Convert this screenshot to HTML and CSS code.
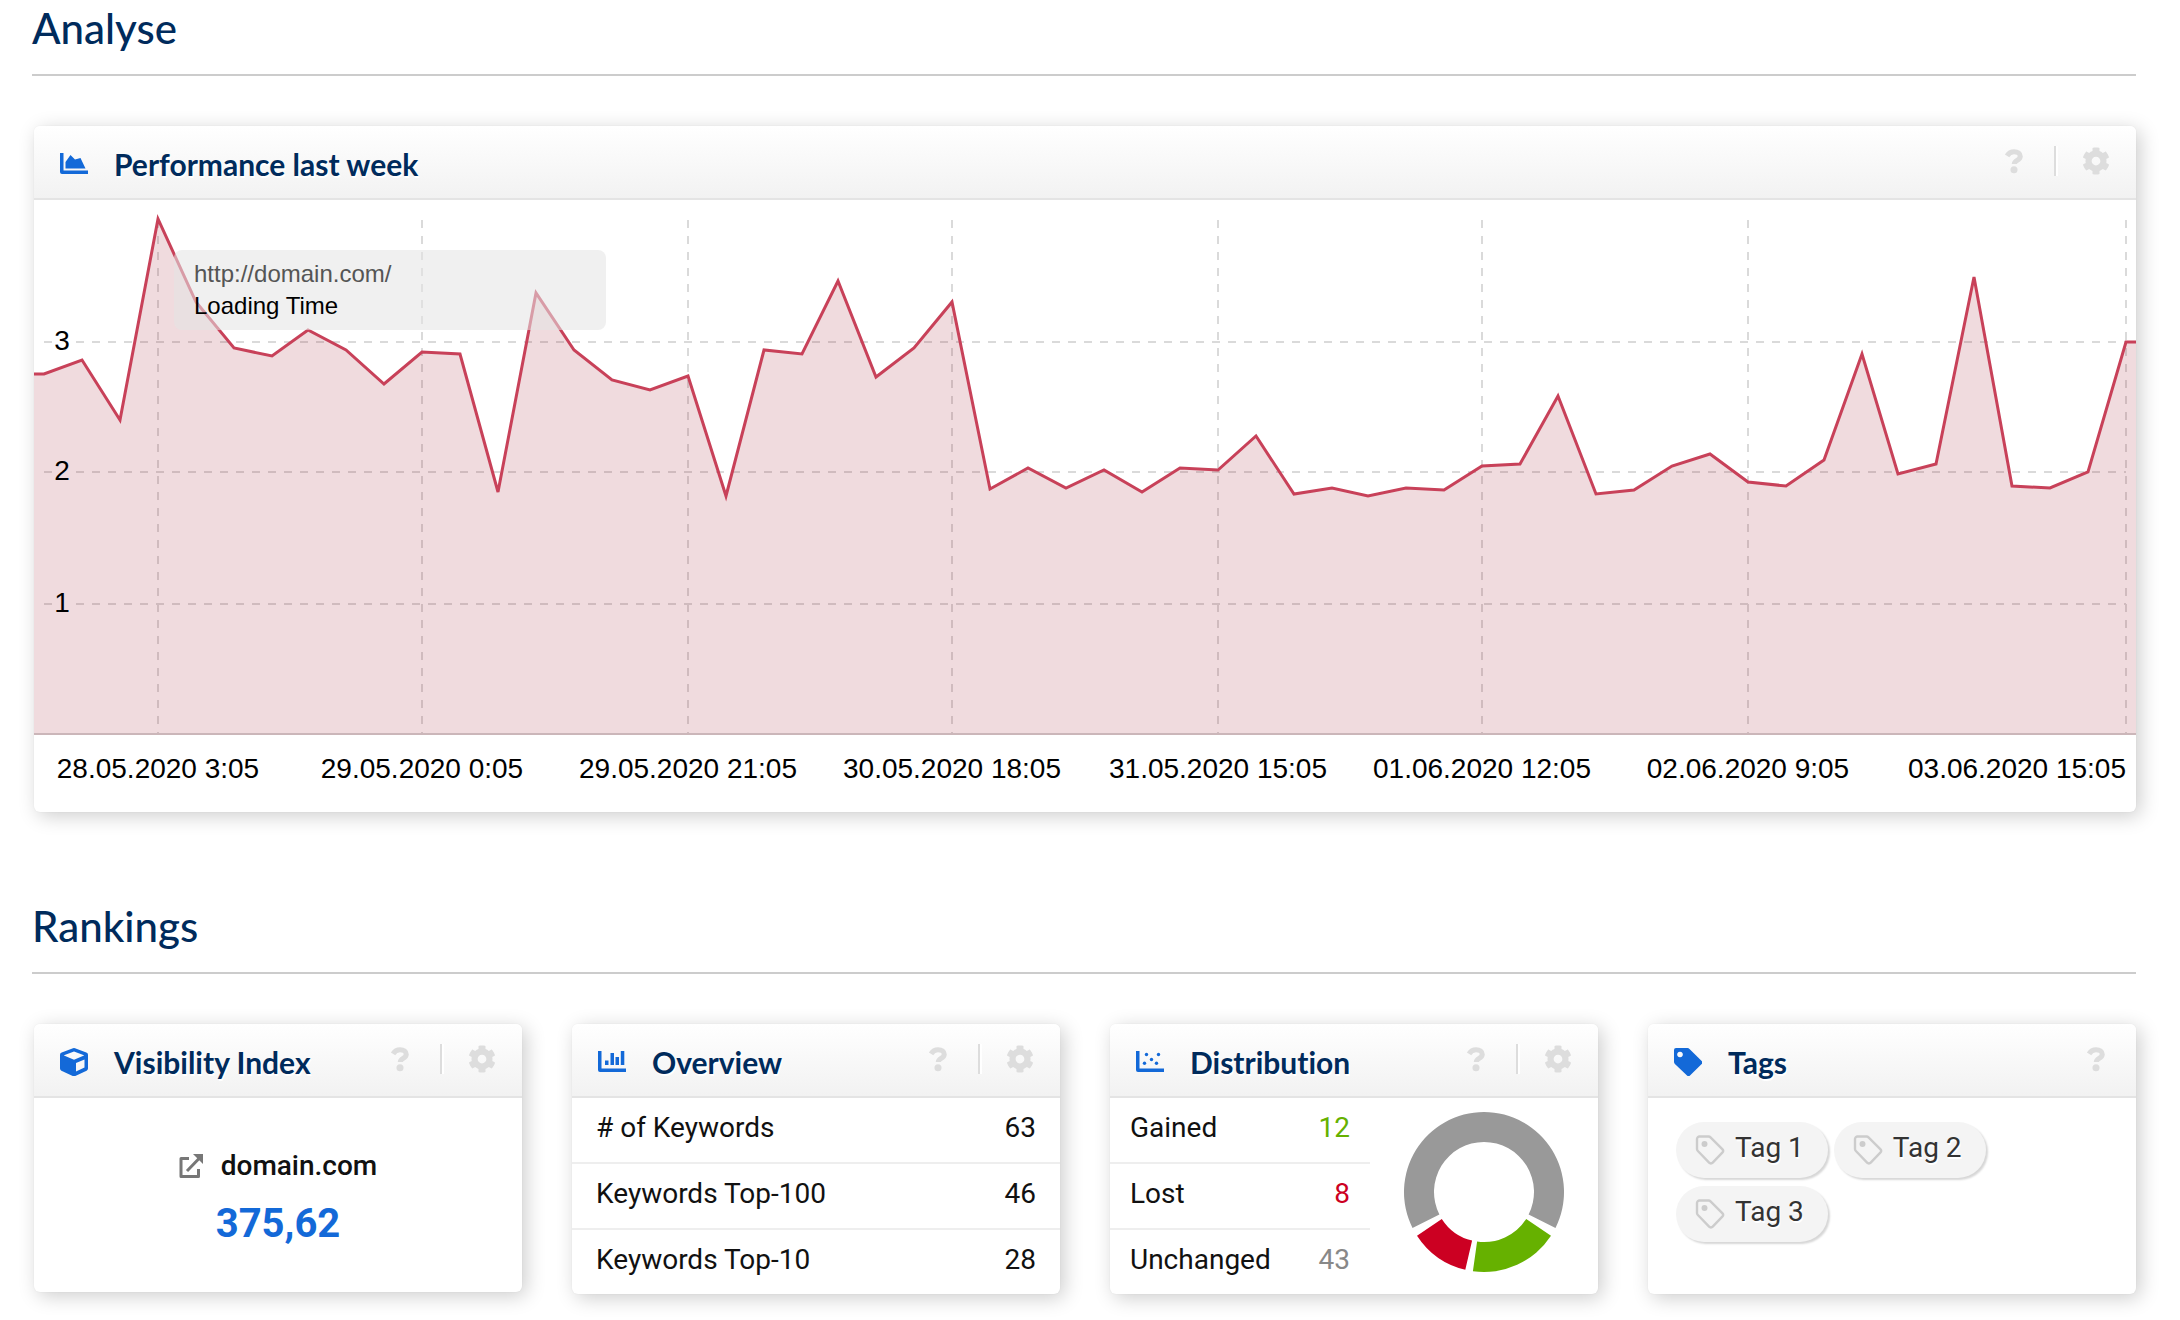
FILE: index.html
```html
<!DOCTYPE html>
<html lang="en">
<head>
    <meta charset="UTF-8">
    <meta name="viewport" content="width=device-width, initial-scale=1.0">
    <title>Dashboard</title>
    <link rel="stylesheet" href="styles.css">
</head>
<body>

    <!-- Shared icons -->
    <svg class="sprite" aria-hidden="true">
        <symbol id="icon-help" viewBox="0 0 20 28">
            <path d="M2.500 8.500C4.500 5.200 7 4 10 4c4.200 0 6.700 1.900 6.700 4.900 0 4.600-6.300 4.200-6.300 8.200" fill="none" stroke="currentColor" stroke-width="5.500"/>
            <circle cx="10" cy="23.500" r="3.800" fill="currentColor"/>
        </symbol>
        <symbol id="icon-gear" viewBox="0 0 512 512">
            <path fill="currentColor" d="M487.400 315.700l-42.600-24.600c4.300-23.200 4.300-47 0-70.200l42.600-24.600c4.900-2.800 7.100-8.600 5.500-14-11.100-35.600-30-67.800-54.700-94.600-3.800-4.100-10-5.100-14.800-2.300L380.800 110c-17.900-15.400-38.500-27.300-60.800-35.100V25.800c0-5.600-3.900-10.500-9.400-11.700-36.700-8.200-74.300-7.800-109.200 0-5.500 1.200-9.400 6.100-9.400 11.700V75c-22.200 7.900-42.800 19.800-60.800 35.100L88.700 85.500c-4.900-2.800-11-1.900-14.800 2.300-24.700 26.700-43.600 58.900-54.700 94.600-1.700 5.400.6 11.200 5.500 14L67.300 221c-4.300 23.200-4.300 47 0 70.200l-42.600 24.600c-4.900 2.800-7.100 8.600-5.500 14 11.100 35.600 30 67.800 54.700 94.600 3.800 4.100 10 5.100 14.800 2.300l42.600-24.600c17.900 15.400 38.500 27.300 60.800 35.100v49.200c0 5.600 3.900 10.500 9.400 11.700 36.700 8.200 74.300 7.800 109.200 0 5.500-1.200 9.400-6.100 9.400-11.700v-49.200c22.200-7.900 42.800-19.800 60.800-35.100l42.600 24.600c4.900 2.800 11 1.900 14.800-2.300 24.700-26.700 43.600-58.900 54.700-94.600 1.500-5.500-.7-11.300-5.600-14.100zM256 336c-44.100 0-80-35.900-80-80s35.900-80 80-80 80 35.900 80 80-35.900 80-80 80z"/>
        </symbol>
        <symbol id="icon-tag" viewBox="0 0 30 30">
            <path d="M2 4a2.500 2.500 0 0 1 2.500-2.500H13.500a3 3 0 0 1 2 .9L27.300 14.200a2.500 2.500 0 0 1 0 3.500L17.700 27.700a2.500 2.500 0 0 1-3.600 0L2.900 16a3 3 0 0 1-.9-2z" fill="none" stroke="currentColor" stroke-width="2.400"/>
            <circle cx="9.500" cy="9" r="3" fill="currentColor"/>
        </symbol>
    </svg>

    <main class="page">

        <section class="section">
            <h1 class="section-title">Analyse</h1>

            <article class="card">
                <header class="card-header">
                    <svg class="card-icon" viewBox="0 0 28 28" aria-hidden="true">
                        <path d="M0 3h3.500v17.500H28V24H2a2 2 0 0 1-2-2z" fill="currentColor"/>
                        <path d="M5.500 18.500V12L10.500 5 15 9.500 20.500 8 25.500 18.500z" fill="currentColor"/>
                    </svg>
                    <h2 class="card-title">Performance last week</h2>
                    <div class="card-tools">
                        <button class="tool" type="button" aria-label="Help"><svg class="tool-help"><use href="#icon-help"/></svg></button>
                        <span class="tool-divider"></span>
                        <button class="tool" type="button" aria-label="Settings"><svg class="tool-gear"><use href="#icon-gear"/></svg></button>
                    </div>
                </header>
                <div class="chart">
                    <svg class="chart-svg" viewBox="34 200 2102 612" role="img" aria-label="Loading time chart">
                        <!-- Grid, left open behind the value labels -->
                        <g class="chart-grid">
                            <path d="M44 342h8M76 342H2126M44 472h8M76 472H2126M44 604h8M76 604H2126"/>
                            <path d="M158 220V733M422 220V733M688 220V733M952 220V733M1218 220V733M1482 220V733M1748 220V733M2126 220V733"/>
                        </g>
                        <path class="chart-axis" d="M34 734H2136"/>

                        <!-- Loading time -->
                        <path class="chart-area" d="M34 374L44 374L82 360L120 420L158 219L196 302L234 348L272 356L308 330L346 350L384 384L422 352L460 354L498 492L536 293L574 350L612 380L650 390L688 376L726 496L764 350L802 354L838 281L876 377L914 348L952 302L990 489L1028 468L1066 488L1104 470L1142 492L1180 468L1218 470L1256 436L1294 494L1332 488L1368 496L1406 488L1444 490L1482 466L1520 464L1558 396L1596 494L1634 490L1672 466L1710 454L1748 482L1786 486L1824 460L1862 354L1898 474L1936 464L1974 277L2012 486L2050 488L2088 472L2126 342L2136 342V735H34Z"/>
                        <path class="chart-line" d="M34 374L44 374L82 360L120 420L158 219L196 302L234 348L272 356L308 330L346 350L384 384L422 352L460 354L498 492L536 293L574 350L612 380L650 390L688 376L726 496L764 350L802 354L838 281L876 377L914 348L952 302L990 489L1028 468L1066 488L1104 470L1142 492L1180 468L1218 470L1256 436L1294 494L1332 488L1368 496L1406 488L1444 490L1482 466L1520 464L1558 396L1596 494L1634 490L1672 466L1710 454L1748 482L1786 486L1824 460L1862 354L1898 474L1936 464L1974 277L2012 486L2050 488L2088 472L2126 342L2136 342"/>

                        <g class="chart-labels">
                            <text x="62" y="350">3</text>
                            <text x="62" y="480">2</text>
                            <text x="62" y="612">1</text>
                            <text x="158" y="778">28.05.2020 3:05</text>
                            <text x="422" y="778">29.05.2020 0:05</text>
                            <text x="688" y="778">29.05.2020 21:05</text>
                            <text x="952" y="778">30.05.2020 18:05</text>
                            <text x="1218" y="778">31.05.2020 15:05</text>
                            <text x="1482" y="778">01.06.2020 12:05</text>
                            <text x="1748" y="778">02.06.2020 9:05</text>
                            <text class="label-end" x="2126" y="778">03.06.2020 15:05</text>
                        </g>
                    </svg>
                    <div class="chart-tooltip">
                        <div class="tooltip-url">http://domain.com/</div>
                        <div>Loading Time</div>
                    </div>
                </div>
            </article>
        </section>

        <section class="section">
            <h1 class="section-title">Rankings</h1>

            <div class="cards">
                <article class="card">
                    <header class="card-header">
                        <svg class="card-icon" viewBox="0 0 28 28" aria-hidden="true">
                            <path fill="currentColor" fill-rule="evenodd" d="M13 .3a3 3 0 0 1 2 0L26.300 4.400A2.500 2.500 0 0 1 28 6.800V20.600a2.500 2.500 0 0 1-1.400 2.200L15.300 28a3 3 0 0 1-2.600 0L1.400 22.800A2.500 2.500 0 0 1 0 20.600V6.800A2.500 2.500 0 0 1 1.700 4.400zM14 3.600L4 7.300v.3L14 11.800 24 7.600v-.3zM16 23.400L24.500 19.400V11.500L16 15z"/>
                        </svg>
                        <h2 class="card-title">Visibility Index</h2>
                        <div class="card-tools">
                            <button class="tool" type="button" aria-label="Help"><svg class="tool-help"><use href="#icon-help"/></svg></button>
                            <span class="tool-divider"></span>
                            <button class="tool" type="button" aria-label="Settings"><svg class="tool-gear"><use href="#icon-gear"/></svg></button>
                        </div>
                    </header>
                    <div class="visibility">
                        <a class="domain" href="#">
                            <svg class="domain-icon" viewBox="0 0 24 24" aria-hidden="true">
                                <path d="M10 4.500H2V22.500H19.500V15M8 17L21 3.500" fill="none" stroke="currentColor" stroke-width="3" stroke-linejoin="round"/>
                                <path d="M14 0H24V10L20.500 6.500 17.500 3.500z" fill="currentColor"/>
                            </svg>
                            domain.com
                        </a>
                        <div class="visibility-value">375,62</div>
                    </div>
                </article>

                <article class="card">
                    <header class="card-header">
                        <svg class="card-icon" viewBox="0 0 28 28" aria-hidden="true">
                            <path d="M0 3h3.500v17.500H28V24H2a2 2 0 0 1-2-2z" fill="currentColor"/>
                            <path d="M7 12.500h3.500V17H7zM12.500 5h3.500v12h-3.500zM17.500 9H21v8h-3.500zM22.800 3h3.500v14h-3.500z" fill="currentColor"/>
                        </svg>
                        <h2 class="card-title">Overview</h2>
                        <div class="card-tools">
                            <button class="tool" type="button" aria-label="Help"><svg class="tool-help"><use href="#icon-help"/></svg></button>
                            <span class="tool-divider"></span>
                            <button class="tool" type="button" aria-label="Settings"><svg class="tool-gear"><use href="#icon-gear"/></svg></button>
                        </div>
                    </header>
                    <table class="stats">
                        <tr><th scope="row"># of Keywords</th><td>63</td></tr>
                        <tr><th scope="row">Keywords Top-100</th><td>46</td></tr>
                        <tr><th scope="row">Keywords Top-10</th><td>28</td></tr>
                    </table>
                </article>

                <article class="card">
                    <header class="card-header">
                        <svg class="card-icon" viewBox="0 0 28 28" aria-hidden="true">
                            <path d="M0 3h3.500v17.500H28V24H2a2 2 0 0 1-2-2z" fill="currentColor"/>
                            <g fill="currentColor">
                                <circle cx="10.500" cy="6.500" r="1.700"/>
                                <circle cx="22.500" cy="6.500" r="1.700"/>
                                <circle cx="15.500" cy="11.500" r="1.700"/>
                                <circle cx="8.500" cy="15.300" r="1.700"/>
                                <circle cx="20.500" cy="15.300" r="1.700"/>
                            </g>
                        </svg>
                        <h2 class="card-title">Distribution</h2>
                        <div class="card-tools">
                            <button class="tool" type="button" aria-label="Help"><svg class="tool-help"><use href="#icon-help"/></svg></button>
                            <span class="tool-divider"></span>
                            <button class="tool" type="button" aria-label="Settings"><svg class="tool-gear"><use href="#icon-gear"/></svg></button>
                        </div>
                    </header>
                    <div class="distribution">
                        <table class="stats stats-narrow">
                            <tr><th scope="row">Gained</th><td class="gained">12</td></tr>
                            <tr><th scope="row">Lost</th><td class="lost">8</td></tr>
                            <tr><th scope="row">Unchanged</th><td class="unchanged">43</td></tr>
                        </table>
                        <div class="donut">
                            <svg class="donut-svg" viewBox="-80 -80 160 160" role="img" aria-label="Distribution">
                                <path fill="#999" d="M-71.500 35.900A80 80 0 1 1 71.500 35.900L44.600 22.600A50 50 0 1 0-44.600 22.600Z"/>
                                <path fill="#66b100" d="M67 43.700A80 80 0 0 1-11.100 79.200L-6.900 49.500A50 50 0 0 0 42.200 26.900Z"/>
                                <path fill="#c02" d="M-67 43.700A80 80 0 0 0-18.700 77.800L-11.900 48.600A50 50 0 0 1-42.200 26.900Z"/>
                            </svg>
                        </div>
                    </div>
                </article>

                <article class="card">
                    <header class="card-header">
                        <svg class="card-icon" viewBox="0 0 28 28" aria-hidden="true">
                            <path fill="currentColor" fill-rule="evenodd" d="M0 2a2 2 0 0 1 2-2h11.500a3 3 0 0 1 2 .9L27.700 13a2 2 0 0 1 0 3L16 27.500a2 2 0 0 1-3 0L.900 16A3 3 0 0 1 0 14zM6 3.700a2.800 2.800 0 1 0 .01 0z"/>
                        </svg>
                        <h2 class="card-title">Tags</h2>
                        <div class="card-tools">
                            <button class="tool" type="button" aria-label="Help"><svg class="tool-help"><use href="#icon-help"/></svg></button>
                        </div>
                    </header>
                    <div class="tags">
                        <a class="tag" href="#"><svg class="tag-icon"><use href="#icon-tag"/></svg>Tag 1</a>
                        <a class="tag" href="#"><svg class="tag-icon"><use href="#icon-tag"/></svg>Tag 2</a>
                        <a class="tag" href="#"><svg class="tag-icon"><use href="#icon-tag"/></svg>Tag 3</a>
                    </div>
                </article>
            </div>
        </section>

    </main>

</body>
</html>
```

FILE: styles.css
```css
* {
    box-sizing: border-box;
}
body {
    margin: 0;
    background: white;
    color: #111;
    font-family: Roboto, sans-serif;
    font-size: 28px;
    line-height: 32px;
}
.sprite {
    display: none;
}
.page {
    padding: 0 44px 24px 32px;
}
.section {
    margin-bottom: 86px;
}
.section:last-child {
    margin-bottom: 0;
}
.section-title {
    margin: 0 0 50px;
    padding: 4px 0 22px;
    border-bottom: 2px solid #ccc;
    color: #002b5c;
    font-family: Lato, sans-serif;
    font-size: 42px;
    font-weight: 500;
    line-height: 48px;
}

/* Cards */
.card {
    margin-left: 2px;
    border-radius: 6px;
    background: white;
    box-shadow: 4px 4px 20px rgba(0, 0, 0, 0.2), 0 0 2px rgba(0, 0, 0, 0.06);
}
.cards {
    display: grid;
    grid-template-columns: repeat(4, 1fr);
    align-items: start;
    gap: 48px;
}
.card-header {
    display: flex;
    height: 74px;
    padding: 0 24px 0 26px;
    border-bottom: 2px solid #e4e4e4;
    border-radius: 6px 6px 0 0;
    background: linear-gradient(#fff, #f2f2f2);
}
.card-icon {
    width: 28px;
    height: 28px;
    margin-top: 24px;
    color: #1369d8;
}
.card-title {
    margin: 20px 0 0 26px;
    color: #002b5c;
    font-family: Lato, sans-serif;
    font-size: 30px;
    font-weight: bold;
    font-variant-ligatures: none;
    line-height: 36px;
    text-shadow: 1px 2px 0 white;
}
.card-tools {
    display: flex;
    align-items: center;
    height: 30px;
    margin: 20px 0 0 auto;
}
.tool {
    display: flex;
    align-items: center;
    justify-content: center;
    width: 32px;
    height: 30px;
    padding: 0;
    border: none;
    background: none;
    color: #ddd;
    cursor: pointer;
}
.tool:hover {
    color: #999;
}
.tool-help {
    width: 20px;
    height: 26px;
}
.tool-gear {
    width: 28px;
    height: 28px;
}
.tool-divider {
    width: 4px;
    height: 30px;
    margin: 0 22px 0 24px;
    border-left: 2px solid #ddd;
    background: white;
}

/* Chart */
.chart {
    position: relative;
}
.chart-svg {
    display: block;
    width: 100%;
    height: auto;
}
.chart-grid {
    fill: none;
    stroke: #dadada;
    stroke-width: 2;
    stroke-dasharray: 8 8;
}
.chart-axis {
    stroke: #d4d4d4;
    stroke-width: 2;
}
.chart-area {
    fill: #9b0f20;
    fill-opacity: 0.15;
}
.chart-line {
    fill: none;
    stroke: #c84159;
    stroke-width: 3;
}
.chart-labels {
    fill: black;
    font-family: "Liberation Sans", Arial, sans-serif;
    font-size: 28px;
    text-anchor: middle;
}
.label-end {
    text-anchor: end;
}
.chart-tooltip {
    position: absolute;
    top: 50px;
    left: 140px;
    width: 432px;
    padding: 8px 20px;
    border-radius: 8px;
    background: rgba(228, 228, 228, 0.56);
    color: black;
    font-family: "Liberation Sans", Arial, sans-serif;
    font-size: 24px;
}
.tooltip-url {
    color: #555;
}

/* Visibility */
.visibility {
    display: flex;
    flex-direction: column;
    align-items: center;
    height: 194px;
    padding-top: 52px;
}
.domain {
    display: flex;
    align-items: center;
    gap: 18px;
    color: #111;
    font-weight: 500;
    text-decoration: none;
}
.domain-icon {
    width: 24px;
    height: 24px;
    color: #777;
}
.visibility-value {
    margin-top: 18px;
    color: #1369d8;
    font-size: 40px;
    font-weight: bold;
    line-height: 48px;
}

/* Tables */
.stats {
    width: 100%;
    border-collapse: collapse;
}
.stats th,
.stats td {
    padding: 14px 24px 18px;
    border-bottom: 2px solid #eee;
    font-weight: normal;
    text-align: left;
}
.stats td {
    text-align: right;
}
.stats tr:last-child th,
.stats tr:last-child td {
    border-bottom: none;
}
.distribution {
    display: flex;
}
.stats-narrow {
    width: 260px;
}
.stats-narrow th,
.stats-narrow td {
    padding-left: 20px;
    padding-right: 20px;
}
.stats .gained {
    color: #66b100;
}
.stats .lost {
    color: #c02;
}
.stats .unchanged {
    color: #888;
}
.donut {
    flex: 1;
    padding-top: 14px;
    text-align: center;
}
.donut-svg {
    width: 160px;
    height: 160px;
}

/* Tags */
.tags {
    display: flex;
    flex-wrap: wrap;
    align-content: flex-start;
    gap: 8px 6px;
    min-height: 196px;
    padding: 24px 120px 24px 28px;
}
.tag {
    display: flex;
    align-items: center;
    gap: 10px;
    height: 56px;
    padding: 0 24px 4px 19px;
    border-radius: 28px;
    background: #f4f4f4;
    box-shadow: 2px 2px 2px rgba(0, 0, 0, 0.16);
    color: #333;
    text-decoration: none;
    text-shadow: 1px 2px 0 white;
}
.tag-icon {
    width: 30px;
    height: 30px;
    margin-top: 4px;
    color: #ccc;
}
```
